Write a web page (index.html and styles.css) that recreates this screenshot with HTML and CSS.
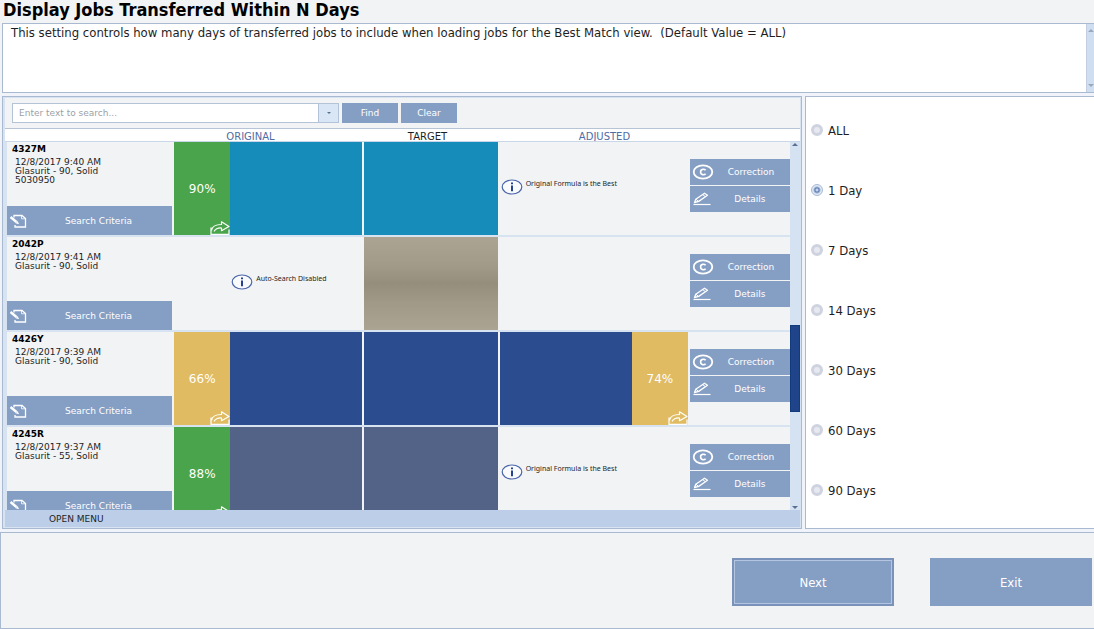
FILE: index.html
```html
<!DOCTYPE html>
<html lang="en">
<head>
    <meta charset="UTF-8">
    <meta name="viewport" content="width=device-width, initial-scale=1.0">
    <title>Display Jobs Transferred Within N Days</title>
    <link rel="stylesheet" href="styles.css">
</head>
<body>

    <!-- Shared icons -->
    <svg class="sprite" aria-hidden="true">
        <symbol id="icon-criteria" viewBox="0 0 18 16">
            <path d="M5 4.500V2.500h8l3.500 3v8.500H6v-2" fill="none" stroke="currentColor" stroke-width="1.300"/>
            <path d="M12.500 2.500v3.300h4" fill="none" stroke="currentColor" stroke-width=".8"/>
            <path d="M1.500 4l6 5" fill="none" stroke="currentColor" stroke-width="2.400"/>
            <path d="M6.500 10.300l3.600.9-1.500-3.300z" fill="currentColor"/>
        </symbol>
        <symbol id="icon-share" viewBox="0 0 20 14">
            <path d="M1 6.500v6.800h18V8.500" fill="none" stroke="currentColor" stroke-width="1.200"/>
            <path d="M1.500 9.500C2 5.500 5.500 3.500 11.500 3.500V.8L19 5.500l-7.500 4.200V7C7.500 6.700 5.500 8 4 10.500" fill="none" stroke="currentColor" stroke-width="1.200" stroke-linejoin="round"/>
        </symbol>
        <symbol id="icon-info" viewBox="0 0 22 16">
            <ellipse cx="11" cy="8" rx="9.800" ry="7" fill="#f8fafc" stroke="#4a64a8" stroke-width="1.200"/>
            <path d="M10 3.500h2v1.700h-2zM10 6.500h2v5.700h-2z" fill="#26418f"/>
        </symbol>
        <symbol id="icon-c" viewBox="0 0 22 16">
            <ellipse cx="11" cy="8" rx="9.300" ry="6.700" fill="none" stroke="currentColor" stroke-width="1.800"/>
            <path d="M13.600 6.300C12.500 4.900 8.600 4.700 8.600 8s3.900 3.100 5 1.700" fill="none" stroke="currentColor" stroke-width="1.600"/>
        </symbol>
        <symbol id="icon-pencil" viewBox="0 0 20 16">
            <path d="M2.500 11.500l1.300-3.300L12.500 2.200l3 2L6.700 10.400z" fill="none" stroke="currentColor" stroke-width="1.300" stroke-linejoin="round"/>
            <path d="M10.500 3.600l3 2M3.800 8.200l2.900 2.200" stroke="currentColor" stroke-width="1"/>
            <path d="M1.500 13.500h17" stroke="currentColor" stroke-width="1.200"/>
        </symbol>
    </svg>

    <h1 class="title">Display Jobs Transferred Within N Days</h1>

    <!-- Setting description -->
    <div class="description">
        <p class="description-text">This setting controls how many days of transferred jobs to include when loading jobs for the Best Match view.&nbsp; (Default Value = ALL)</p>
        <div class="description-scroll">
            <span class="arrow-up"></span>
            <span class="arrow-down"></span>
        </div>
    </div>

    <main class="content">

        <!-- Best Match preview -->
        <section class="preview">
            <form class="search">
                <div class="combo">
                    <input type="text" class="combo-input" placeholder="Enter text to search..." aria-label="Search text">
                    <button type="button" class="combo-toggle" aria-label="Show recent searches"><span class="arrow-down"></span></button>
                </div>
                <button type="button" class="btn search-btn">Find</button>
                <button type="button" class="btn search-btn">Clear</button>
            </form>

            <div class="column-heads">
                <span class="head-original">ORIGINAL</span>
                <span class="head-target">TARGET</span>
                <span class="head-adjusted">ADJUSTED</span>
            </div>

            <div class="list">
                <div class="jobs">
                    <article class="job">
                        <div class="job-info">
                            <h2 class="job-code">4327M</h2>
                            <p class="job-text">12/8/2017 9:40 AM<br>Glasurit - 90, Solid<br>5030950</p>
                            <button type="button" class="btn criteria"><svg class="icon-criteria"><use href="#icon-criteria"/></svg><span class="btn-label">Search Criteria</span></button>
                        </div>
                        <div class="match">
                            <div class="score green">90%<svg class="icon-share"><use href="#icon-share"/></svg></div>
                            <div class="swatch teal"></div>
                        </div>
                        <div class="swatch teal"></div>
                        <div class="notice"><svg class="icon-info"><use href="#icon-info"/></svg><span>Original Formula is the Best</span></div>
                        <div class="actions">
                            <button type="button" class="btn action"><svg class="icon-c"><use href="#icon-c"/></svg><span class="btn-label">Correction</span></button>
                            <button type="button" class="btn action"><svg class="icon-pencil"><use href="#icon-pencil"/></svg><span class="btn-label">Details</span></button>
                        </div>
                    </article>

                    <article class="job">
                        <div class="job-info">
                            <h2 class="job-code">2042P</h2>
                            <p class="job-text">12/8/2017 9:41 AM<br>Glasurit - 90, Solid</p>
                            <button type="button" class="btn criteria"><svg class="icon-criteria"><use href="#icon-criteria"/></svg><span class="btn-label">Search Criteria</span></button>
                        </div>
                        <div class="match">
                            <div class="score"></div>
                            <div class="notice"><svg class="icon-info"><use href="#icon-info"/></svg><span>Auto-Search Disabled</span></div>
                        </div>
                        <div class="swatch beige"></div>
                        <div></div>
                        <div class="actions">
                            <button type="button" class="btn action"><svg class="icon-c"><use href="#icon-c"/></svg><span class="btn-label">Correction</span></button>
                            <button type="button" class="btn action"><svg class="icon-pencil"><use href="#icon-pencil"/></svg><span class="btn-label">Details</span></button>
                        </div>
                    </article>

                    <article class="job">
                        <div class="job-info">
                            <h2 class="job-code">4426Y</h2>
                            <p class="job-text">12/8/2017 9:39 AM<br>Glasurit - 90, Solid</p>
                            <button type="button" class="btn criteria"><svg class="icon-criteria"><use href="#icon-criteria"/></svg><span class="btn-label">Search Criteria</span></button>
                        </div>
                        <div class="match">
                            <div class="score yellow">66%<svg class="icon-share"><use href="#icon-share"/></svg></div>
                            <div class="swatch blue"></div>
                        </div>
                        <div class="swatch blue"></div>
                        <div class="match">
                            <div class="swatch blue"></div>
                            <div class="score yellow">74%<svg class="icon-share"><use href="#icon-share"/></svg></div>
                        </div>
                        <div class="actions">
                            <button type="button" class="btn action"><svg class="icon-c"><use href="#icon-c"/></svg><span class="btn-label">Correction</span></button>
                            <button type="button" class="btn action"><svg class="icon-pencil"><use href="#icon-pencil"/></svg><span class="btn-label">Details</span></button>
                        </div>
                    </article>

                    <article class="job">
                        <div class="job-info">
                            <h2 class="job-code">4245R</h2>
                            <p class="job-text">12/8/2017 9:37 AM<br>Glasurit - 55, Solid</p>
                            <button type="button" class="btn criteria"><svg class="icon-criteria"><use href="#icon-criteria"/></svg><span class="btn-label">Search Criteria</span></button>
                        </div>
                        <div class="match">
                            <div class="score green">88%<svg class="icon-share"><use href="#icon-share"/></svg></div>
                            <div class="swatch slate"></div>
                        </div>
                        <div class="swatch slate"></div>
                        <div class="notice"><svg class="icon-info"><use href="#icon-info"/></svg><span>Original Formula is the Best</span></div>
                        <div class="actions">
                            <button type="button" class="btn action"><svg class="icon-c"><use href="#icon-c"/></svg><span class="btn-label">Correction</span></button>
                            <button type="button" class="btn action"><svg class="icon-pencil"><use href="#icon-pencil"/></svg><span class="btn-label">Details</span></button>
                        </div>
                    </article>
                </div>

                <div class="scrollbar">
                    <span class="arrow-up"></span>
                    <div class="track"><div class="thumb"></div></div>
                    <span class="arrow-down"></span>
                </div>
            </div>

            <button type="button" class="open-menu">OPEN MENU</button>
        </section>

        <!-- Setting value -->
        <form class="options">
            <label class="option"><input type="radio" name="days" value="all">ALL</label>
            <label class="option"><input type="radio" name="days" value="1" checked>1 Day</label>
            <label class="option"><input type="radio" name="days" value="7">7 Days</label>
            <label class="option"><input type="radio" name="days" value="14">14 Days</label>
            <label class="option"><input type="radio" name="days" value="30">30 Days</label>
            <label class="option"><input type="radio" name="days" value="60">60 Days</label>
            <label class="option"><input type="radio" name="days" value="90">90 Days</label>
        </form>
    </main>

    <footer class="footer">
        <button type="button" class="btn footer-btn default">Next</button>
        <button type="button" class="btn footer-btn">Exit</button>
    </footer>

</body>
</html>
```
FILE: styles.css
```css
* {
    box-sizing: border-box;
}
body {
    margin: 0;
    height: 100vh;
    display: flex;
    flex-direction: column;
    overflow: hidden;
    background-color: #f1f3f5;
    color: #1e1e1e;
    font-family: Tahoma, "DejaVu Sans Condensed", "Noto Sans", sans-serif;
    font-size: 13px;
}
h1, h2, p {
    margin: 0;
}
button, input {
    font-family: inherit;
}
.sprite {
    display: none;
}
.title {
    height: 23px;
    padding-left: 3px;
    color: #000;
    font-size: 18px;
    line-height: 20px;
    white-space: nowrap;
}
.arrow-up, .arrow-down {
    border: 3px solid transparent;
}
.arrow-up {
    border-top: 0;
    border-bottom-color: #5b6f92;
}
.arrow-down {
    border-bottom: 0;
    border-top-color: #5b6f92;
}

/* Description */
.description {
    display: flex;
    flex: none;
    height: 70px;
    margin-left: 2px;
    border: 1px solid #a9b9cf;
    border-right: 0;
    background-color: #fff;
}
.description-text {
    flex: 1;
    padding-left: 8px;
    line-height: 18px;
}
.description-scroll {
    display: flex;
    flex-direction: column;
    justify-content: space-between;
    align-items: flex-end;
    width: 8px;
    padding: 5px 0;
    border-left: 1px solid #c3cfe0;
    background-color: #cfdef0;
}
.description-scroll .arrow-up {
    border-bottom-color: #9aa8bd;
}
.description-scroll .arrow-down {
    border-top-color: #9aa8bd;
}

/* Main area */
.content {
    display: grid;
    flex: 1;
    grid-template-columns: 800fr 289fr;
    grid-template-rows: minmax(0, 1fr);
    gap: 3px;
    min-height: 0;
    padding: 3px 0 3px 2px;
    background-color: #f0f4fa;
}
.preview {
    display: flex;
    flex-direction: column;
    min-width: 0;
    padding: 1px;
    padding-left: 2px;
    border: 1px solid #a9b9cf;
    background-color: #d8e3f2;
    font-family: Verdana, "DejaVu Sans", sans-serif;
    font-size: 9px;
}
.btn {
    border: 0;
    background-color: #859ec4;
    color: #fff;
    cursor: pointer;
}
.search {
    display: flex;
    gap: 3px;
    height: 31px;
    padding: 5px 7px;
    border-bottom: 1px solid #b7c4d6;
    background-color: #f1f3f5;
}
.combo {
    display: flex;
    width: 327px;
    border: 1px solid #b4c3d8;
    background-color: #fff;
}
.combo-input {
    flex: 1;
    min-width: 0;
    padding: 0 6px;
    border: 0;
    font-size: 9px;
}
.combo-input::placeholder {
    color: #9a9fa8;
}
.combo-toggle {
    display: flex;
    align-items: center;
    justify-content: center;
    width: 20px;
    padding: 0;
    border: 0;
    border-left: 1px solid #b4c3d8;
    background-color: #d8e6f5;
}
.combo-toggle .arrow-down {
    border-width: 2px 2px 0;
}
.search-btn {
    width: 56px;
    padding: 0;
    font-size: 9px;
}
.column-heads {
    display: grid;
    grid-template-columns: 177fr 177fr 177fr;
    height: 12px;
    padding: 0 107px 0 157px;
    background-color: #fff;
    font-size: 10px;
    line-height: 15px;
    text-align: center;
}
.head-original, .head-adjusted {
    color: #4f6ca5;
}

/* Job list */
.list {
    display: flex;
    flex: 1;
    min-height: 0;
    overflow: hidden;
    border-top: 1px solid #c9d6e8;
}
.jobs {
    flex: 1;
    display: flex;
    flex-direction: column;
    gap: 2px;
    padding-left: 2px;
}
.job {
    display: grid;
    flex: none;
    grid-template-columns: 165fr 188fr 133fr 188fr 100fr;
    gap: 2px;
    height: 93px;
    background-color: #f1f3f5;
}
.job-info {
    display: flex;
    flex-direction: column;
}
.job-code {
    padding: 2px 5px 3px;
    color: #000;
    font-size: 9px;
    line-height: 11px;
}
.job-text {
    padding-left: 8px;
    line-height: 9px;
}
.criteria, .action {
    display: flex;
    align-items: center;
    padding: 0 2px;
    font-size: 9px;
}
.criteria {
    height: 29px;
    margin-top: auto;
}
.btn-label {
    flex: 1;
    text-align: center;
}
.icon-criteria {
    width: 18px;
    height: 16px;
}
.match {
    display: flex;
}
.match .swatch, .match .notice {
    flex: 1;
}
.score {
    position: relative;
    display: flex;
    align-items: center;
    justify-content: center;
    width: 56px;
    color: #fff;
    font-size: 12px;
}
.icon-share {
    position: absolute;
    right: 0;
    bottom: 0;
    width: 20px;
    height: 14px;
}
.green {
    background-color: #4aa44c;
}
.yellow {
    background-color: #e0bb62;
}
.teal {
    background-color: #158cba;
}
.blue {
    background-color: #2b4d8f;
}
.slate {
    background-color: #526387;
}
.beige {
    background: linear-gradient(#aca493, #a39b8a 30%, #968e7d 50%, #a19988 70%, #aca493);
}
.notice {
    display: flex;
    gap: 3px;
    padding: 37px 1px 0;
    font-family: "Noto Sans", sans-serif;
    font-size: 7px;
    line-height: 9px;
}
.icon-info, .icon-c {
    width: 22px;
    height: 16px;
}
.actions {
    display: flex;
    flex-direction: column;
    gap: 1px;
    padding-top: 17px;
}
.action {
    height: 26px;
}
.icon-pencil {
    width: 20px;
    height: 16px;
}
.scrollbar {
    display: flex;
    flex-direction: column;
    align-items: center;
    width: 10px;
    padding: 1px 0;
    background-color: #d5e2f2;
}
.track {
    display: grid;
    flex: 1;
    grid-template-rows: 179fr 88fr 94fr;
    width: 100%;
}
.thumb {
    grid-row: 2;
    border: 1px solid #123b7d;
    background-color: #1f4489;
}
.open-menu {
    height: 17px;
    padding: 0 44px;
    border: 0;
    background-color: #bdcee8;
    color: #1e1e1e;
    font-size: 9px;
    text-align: left;
}

/* Days options */
.options {
    min-width: 0;
    padding: 3px 5px;
    border: 1px solid #a9b9cf;
    border-right: 0;
    background-color: #fff;
}
.option {
    display: flex;
    align-items: center;
    gap: 5px;
    height: 60px;
}
.option input {
    appearance: none;
    width: 12px;
    height: 12px;
    margin: 0;
    border: 3px solid #ced3df;
    border-radius: 50%;
    background-color: #e6e9ef;
}
.option input:checked {
    border: 1px solid #a9bad6;
    background: radial-gradient(circle, #c3d4ec 0 1px, #5b7bb0 2px, #dfe8f5 4px);
}

/* Footer */
.footer {
    display: flex;
    flex: none;
    gap: 36px;
    justify-content: flex-end;
    align-items: flex-start;
    height: 97px;
    padding: 25px 2px 0 0;
    border: 1px solid #a9b9cf;
    border-right: 0;
}
.footer-btn {
    width: 162px;
    height: 48px;
    font-size: 13px;
}
.default {
    border: 2px solid #7a92ba;
    box-shadow: inset 0 0 0 1px #b3c5e0;
}
```
